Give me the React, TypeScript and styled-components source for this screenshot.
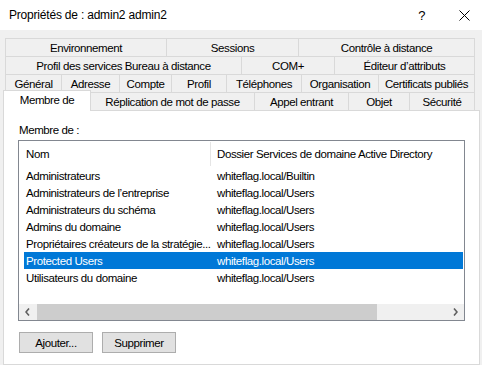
import styled, { createGlobalStyle } from "styled-components";

const GlobalStyle = createGlobalStyle`
  html, body {
    margin: 0;
    padding: 0;
    background: #f0f0f0;
  }
  body {
    font-family: "Liberation Sans", Arial, sans-serif;
    font-size: 11.5px;
    letter-spacing: -0.4px;
    color: #000;
  }
`;

type TabDef = { label: string; width: number; active?: boolean };

const tabRows: TabDef[][] = [
  [
    { label: "Environnement", width: 161 },
    { label: "Sessions", width: 132 },
    { label: "Contrôle à distance", width: 177 },
  ],
  [
    { label: "Profil des services Bureau à distance", width: 236 },
    { label: "COM+", width: 93 },
    { label: "Éditeur d’attributs", width: 141 },
  ],
  [
    { label: "Général", width: 56 },
    { label: "Adresse", width: 58 },
    { label: "Compte", width: 52 },
    { label: "Profil", width: 55 },
    { label: "Téléphones", width: 75 },
    { label: "Organisation", width: 77 },
    { label: "Certificats publiés", width: 97 },
  ],
  [
    { label: "Membre de", width: 86, active: true },
    { label: "Réplication de mot de passe", width: 163 },
    { label: "Appel entrant", width: 94 },
    { label: "Objet", width: 61 },
    { label: "Sécurité", width: 66 },
  ],
];

const groups = [
  { name: "Administrateurs", folder: "whiteflag.local/Builtin" },
  { name: "Administrateurs de l’entreprise", folder: "whiteflag.local/Users" },
  { name: "Administrateurs du schéma", folder: "whiteflag.local/Users" },
  { name: "Admins du domaine", folder: "whiteflag.local/Users" },
  { name: "Propriétaires créateurs de la stratégie...", folder: "whiteflag.local/Users" },
  { name: "Protected Users", folder: "whiteflag.local/Users", selected: true },
  { name: "Utilisateurs du domaine", folder: "whiteflag.local/Users" },
];

export default function App() {
  return (
    <Dialog>
      <GlobalStyle />
      <TitleBar>
        <Title>Propriétés de : admin2 admin2</Title>
        <TitleButtons>
          <HelpGlyph>?</HelpGlyph>
          <svg width="11" height="11" viewBox="0 0 11 11">
            <path d="M0.5 0.5 L10.5 10.5 M10.5 0.5 L0.5 10.5" stroke="#000" strokeWidth="1" />
          </svg>
        </TitleButtons>
      </TitleBar>

      <Body>
        <TabStrip>
          {tabRows.map((row, i) => (
            <TabRow key={i}>
              {row.map((t) => (
                <Tab key={t.label} $width={t.width} $active={t.active}>
                  {t.label}
                </Tab>
              ))}
            </TabRow>
          ))}
        </TabStrip>

        <Panel>
          <FieldLabel>Membre de :</FieldLabel>
          <ListView>
            <ListHeader>
              <HeaderCell $width={187}>Nom</HeaderCell>
              <HeaderCell>Dossier Services de domaine Active Directory</HeaderCell>
            </ListHeader>
            <ListRows>
              {groups.map((g) => (
                <ListRow key={g.name} $selected={g.selected}>
                  <NameCell>{g.name}</NameCell>
                  <FolderCell>{g.folder}</FolderCell>
                </ListRow>
              ))}
            </ListRows>
            <HScrollBar>
              <ScrollArrow>
                <svg width="5" height="8" viewBox="0 0 5 8">
                  <path d="M4 0.5 L1 4 L4 7.5" stroke="#606060" strokeWidth="1.6" fill="none" />
                </svg>
              </ScrollArrow>
              <ScrollTrack>
                <ScrollThumb />
              </ScrollTrack>
              <ScrollArrow>
                <svg width="5" height="8" viewBox="0 0 5 8">
                  <path d="M1 0.5 L4 4 L1 7.5" stroke="#606060" strokeWidth="1.6" fill="none" />
                </svg>
              </ScrollArrow>
            </HScrollBar>
          </ListView>

          <ButtonRow>
            <PushButton>Ajouter...</PushButton>
            <PushButton>Supprimer</PushButton>
          </ButtonRow>
        </Panel>
      </Body>
    </Dialog>
  );
}

const Dialog = styled.div`
  width: 482px;
  height: 365px;
  overflow: hidden;
  background: #f0f0f0;
  display: flex;
  flex-direction: column;
`;

const TitleBar = styled.div`
  height: 30px;
  flex: 0 0 30px;
  background: #fff;
  display: flex;
  align-items: center;
  justify-content: space-between;
  padding-left: 9px;
  box-sizing: border-box;
`;

const Title = styled.div`
  font-size: 12px;
  letter-spacing: -0.2px;
`;

const TitleButtons = styled.div`
  display: flex;
  align-items: center;
  gap: 34px;
  padding-right: 12px;
`;

const HelpGlyph = styled.span`
  font-size: 13px;
  line-height: 1;
`;

const Body = styled.div`
  flex: 1;
  padding: 8px 2px 0 3px;
  display: flex;
  flex-direction: column;
`;

const TabStrip = styled.div`
  display: flex;
  flex-direction: column;
  padding: 0 2px;
  position: relative;
  z-index: 1;
`;

const TabRow = styled.div`
  display: flex;
  height: 18px;
`;

const Tab = styled.div<{ $width: number; $active?: boolean }>`
  width: ${({ $width }) => $width}px;
  flex: 0 0 auto;
  box-sizing: border-box;
  display: flex;
  align-items: center;
  justify-content: center;
  white-space: nowrap;
  background: ${({ $active }) => ($active ? "#fff" : "#f0f0f0")};
  border-top: 1px solid #d9d9d9;
  border-left: 1px solid #d9d9d9;

  &:last-child {
    border-right: 1px solid #d9d9d9;
  }

  ${({ $active }) =>
    $active &&
    `
    margin: -2px 0 -1px -2px;
    width: 88px;
    height: 21px;
    padding-bottom: 2px;
    border-right: 1px solid #d9d9d9;
    & + div { border-left: none; }
  `}
`;

const Panel = styled.div`
  flex: 1;
  background: #fff;
  border: 1px solid #d9d9d9;
  padding: 12px 14px 0 14px;
  display: flex;
  flex-direction: column;
`;

const FieldLabel = styled.div`
  height: 15px;
  line-height: 15px;
  padding-left: 1px;
  margin-bottom: 2px;
`;

const ListView = styled.div`
  width: 447px;
  height: 181px;
  box-sizing: border-box;
  border: 1px solid #828790;
  display: flex;
  flex-direction: column;
`;

const ListHeader = styled.div`
  height: 26px;
  flex: 0 0 26px;
  display: flex;
  align-items: center;
  padding-left: 5px;
`;

const HeaderCell = styled.div<{ $width?: number }>`
  ${({ $width }) => ($width ? `width: ${$width}px; flex: 0 0 auto;` : "flex: 1;")}
  box-sizing: border-box;
  height: 24px;
  line-height: 24px;
  padding-left: ${({ $width }) => ($width ? 2 : 6)}px;
  white-space: nowrap;
  border-right: ${({ $width }) => ($width ? "1px solid #e5e5e5" : "none")};
`;

const ListRows = styled.div`
  flex: 1;
  display: flex;
  flex-direction: column;
`;

const ListRow = styled.div<{ $selected?: boolean }>`
  height: 17px;
  display: flex;
  align-items: center;
  margin: 0 1px 0 5px;
  background: ${({ $selected }) => ($selected ? "#0078d7" : "transparent")};
  color: ${({ $selected }) => ($selected ? "#fff" : "#000")};
  white-space: nowrap;
`;

const NameCell = styled.div`
  width: 187px;
  flex: 0 0 auto;
  padding-left: 2px;
  box-sizing: border-box;
  overflow: hidden;
`;

const FolderCell = styled.div`
  flex: 1;
  padding-left: 6px;
`;

const HScrollBar = styled.div`
  height: 16px;
  flex: 0 0 16px;
  display: flex;
  background: #f0f0f0;
`;

const ScrollArrow = styled.div`
  width: 17px;
  flex: 0 0 17px;
  display: flex;
  align-items: center;
  justify-content: center;
`;

const ScrollTrack = styled.div`
  flex: 1;
  display: flex;
  align-items: stretch;
`;

const ScrollThumb = styled.div`
  width: 340px;
  margin-left: 1px;
  background: #cdcdcd;
`;

const ButtonRow = styled.div`
  display: flex;
  gap: 9px;
  margin-top: 11px;
  padding-left: 1px;
`;

const PushButton = styled.button`
  width: 74px;
  height: 21px;
  box-sizing: border-box;
  background: #e1e1e1;
  border: 1px solid #adadad;
  border-radius: 0;
  font-family: "Liberation Sans", Arial, sans-serif;
  font-size: 11.5px;
  letter-spacing: -0.4px;
  color: #000;
  padding: 0;
`;
